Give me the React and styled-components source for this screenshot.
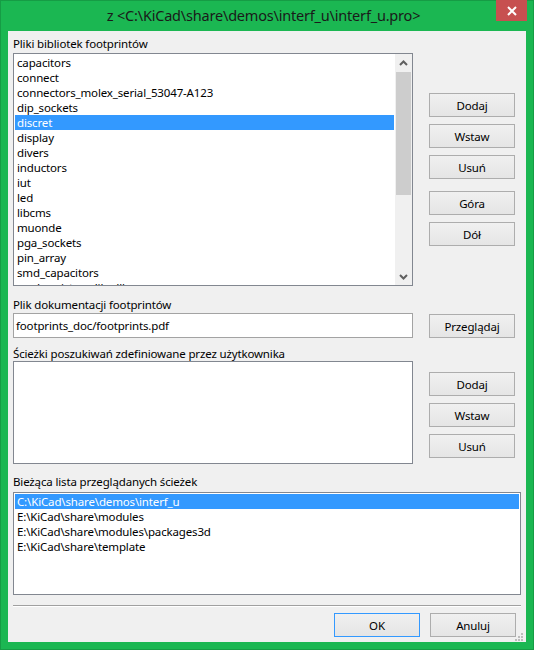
import React from "react";
import styled, { createGlobalStyle } from "styled-components";

const GlobalStyle = createGlobalStyle`
  html, body {
    margin: 0;
    padding: 0;
    background: #ffffff;
  }
  body {
    font-family: "Noto Sans", "Open Sans", sans-serif;
  }
`;

const Window = styled.div`
  width: 534px;
  height: 650px;
  box-sizing: border-box;
  background: #1bb752;
  box-shadow: inset 0 0 0 1px #169c45;
  display: flex;
  flex-direction: column;
`;

const TitleBar = styled.div`
  height: 31px;
  flex: none;
  display: grid;
  grid-template-columns: 1fr auto 1fr;
  align-items: start;
  padding-right: 7px;
`;

const Title = styled.div`
  grid-column: 2;
  line-height: 31px;
  font-size: 14.5px;
  letter-spacing: -0.2px;
  color: #1a1a1a;
  white-space: nowrap;
`;

const CloseButton = styled.div`
  grid-column: 3;
  justify-self: end;
  width: 31px;
  height: 21px;
  background: #c75050;
  display: flex;
  align-items: center;
  justify-content: center;
`;

const Frame = styled.div`
  flex: 1;
  display: flex;
  padding: 0 8px 8px;
`;

const Client = styled.div`
  flex: 1;
  position: relative;
  background: #f0f0f0;
  padding: 5px 5px 0;
  display: flex;
  flex-direction: column;
  font-size: 11.5px;
  letter-spacing: -0.15px;
  color: #000;
`;

const Section = styled.div`
  display: grid;
  grid-template-columns: 400px 86px;
  column-gap: 16px;
  margin-top: ${(p) => p.$top || 0}px;
`;

const Label = styled.div`
  grid-column: 1 / -1;
  line-height: 15px;
  height: 15px;
  white-space: nowrap;
  margin-bottom: ${(p) => p.$gap || 0}px;
`;

const Side = styled.div`
  grid-column: 2;
  display: flex;
  flex-direction: column;
  gap: 7px;
  padding-top: ${(p) => p.$top || 0}px;
`;

const Button = styled.button`
  height: 24px;
  width: ${(p) => (p.$width ? `${p.$width}px` : "auto")};
  box-sizing: border-box;
  border: 1px solid ${(p) => (p.$default ? "#3399ff" : "#adadad")};
  background: linear-gradient(#f0f0f0, #e5e5e5);
  font-family: inherit;
  font-size: 11.5px;
  letter-spacing: -0.15px;
  color: #000;
  padding: 0;
  margin-top: ${(p) => p.$push || 0}px;
`;

const ListBox = styled.div`
  box-sizing: border-box;
  height: ${(p) => p.$height}px;
  background: #fff;
  border: 1px solid #828790;
  display: flex;
  overflow: hidden;
`;

const Rows = styled.div`
  flex: 1;
  padding: 1px;
  overflow: hidden;
`;

const Item = styled.div`
  height: 15px;
  line-height: 15px;
  padding-left: 2px;
  white-space: nowrap;
  background: ${(p) => (p.$selected ? "#3399ff" : "transparent")};
  color: ${(p) => (p.$selected ? "#fff" : "#000")};
`;

const ScrollBar = styled.div`
  width: 17px;
  flex: none;
  background: #f0f0f0;
  display: flex;
  flex-direction: column;
`;

const ArrowBox = styled.div`
  height: 17px;
  flex: none;
  display: flex;
  align-items: center;
  justify-content: center;
  margin-top: ${(p) => (p.$end ? "auto" : "0")};
`;

const Thumb = styled.div`
  height: 123px;
  margin: 1px 1px 0;
  background: #cdcdcd;
`;

const TextInput = styled.div`
  box-sizing: border-box;
  height: 25px;
  background: #fff;
  border: 1px solid #a3a3a3;
  padding-left: 2px;
  line-height: 23px;
  white-space: nowrap;
`;

const Separator = styled.div`
  height: 1px;
  background: #a0a0a0;
  border-bottom: 1px solid #ffffff;
  margin-top: 10px;
`;

const Footer = styled.div`
  display: flex;
  justify-content: flex-end;
  gap: 10px;
  margin-top: 6px;
  padding-right: 5px;
`;

const Grip = styled.svg`
  position: absolute;
  right: 3px;
  bottom: 1px;
`;

const Chevron = ({ down }) => (
  <svg width="9" height="6" viewBox="0 0 9 6">
    <path
      d={down ? "M1 1 L4.5 4.5 L8 1" : "M1 5 L4.5 1.5 L8 5"}
      fill="none"
      stroke="#606060"
      strokeWidth="2"
    />
  </svg>
);

const libraries = [
  "capacitors",
  "connect",
  "connectors_molex_serial_53047-A123",
  "dip_sockets",
  "discret",
  "display",
  "divers",
  "inductors",
  "iut",
  "led",
  "libcms",
  "muonde",
  "pga_sockets",
  "pin_array",
  "smd_capacitors",
  "smd_resistors_lib_dll",
];

const paths = [
  "C:\\KiCad\\share\\demos\\interf_u",
  "E:\\KiCad\\share\\modules",
  "E:\\KiCad\\share\\modules\\packages3d",
  "E:\\KiCad\\share\\template",
];

export default function App() {
  return (
    <>
      <GlobalStyle />
      <Window>
        <TitleBar>
          <Title>z &lt;C:\KiCad\share\demos\interf_u\interf_u.pro&gt;</Title>
          <CloseButton>
            <svg width="10" height="10" viewBox="0 0 10 10">
              <path d="M1 1 L9 9 M9 1 L1 9" stroke="#fff" strokeWidth="2" />
            </svg>
          </CloseButton>
        </TitleBar>
        <Frame>
          <Client>
            <Section>
              <Label $gap={2}>Pliki bibliotek footprintów</Label>
              <ListBox $height={233}>
                <Rows>
                  {libraries.map((name) => (
                    <Item key={name} $selected={name === "discret"}>
                      {name}
                    </Item>
                  ))}
                </Rows>
                <ScrollBar>
                  <ArrowBox>
                    <Chevron />
                  </ArrowBox>
                  <Thumb />
                  <ArrowBox $end>
                    <Chevron down />
                  </ArrowBox>
                </ScrollBar>
              </ListBox>
              <Side $top={40}>
                <Button>Dodaj</Button>
                <Button>Wstaw</Button>
                <Button>Usuń</Button>
                <Button $push={5}>Góra</Button>
                <Button>Dół</Button>
              </Side>
            </Section>

            <Section $top={11}>
              <Label $gap={1}>Plik dokumentacji footprintów</Label>
              <TextInput>footprints_doc/footprints.pdf</TextInput>
              <Side $top={1}>
                <Button>Przeglądaj</Button>
              </Side>
            </Section>

            <Section $top={8}>
              <Label>Ścieżki poszukiwań zdefiniowane przez użytkownika</Label>
              <ListBox $height={103}>
                <Rows />
              </ListBox>
              <Side $top={11}>
                <Button>Dodaj</Button>
                <Button>Wstaw</Button>
                <Button>Usuń</Button>
              </Side>
            </Section>

            <Section $top={10} style={{ display: "block" }}>
              <Label $gap={3}>Bieżąca lista przeglądanych ścieżek</Label>
              <ListBox $height={103}>
                <Rows>
                  {paths.map((p, i) => (
                    <Item key={p} $selected={i === 0}>
                      {p}
                    </Item>
                  ))}
                </Rows>
              </ListBox>
            </Section>

            <Separator />
            <Footer>
              <Button $default $width={86}>
                OK
              </Button>
              <Button $width={86}>Anuluj</Button>
            </Footer>

            <Grip width="8" height="8" viewBox="0 0 8 8">
              <g fill="#bcbcbc">
                <rect x="6" y="0" width="2" height="2" />
                <rect x="3" y="3" width="2" height="2" />
                <rect x="6" y="3" width="2" height="2" />
                <rect x="0" y="6" width="2" height="2" />
                <rect x="3" y="6" width="2" height="2" />
                <rect x="6" y="6" width="2" height="2" />
              </g>
            </Grip>
          </Client>
        </Frame>
      </Window>
    </>
  );
}
